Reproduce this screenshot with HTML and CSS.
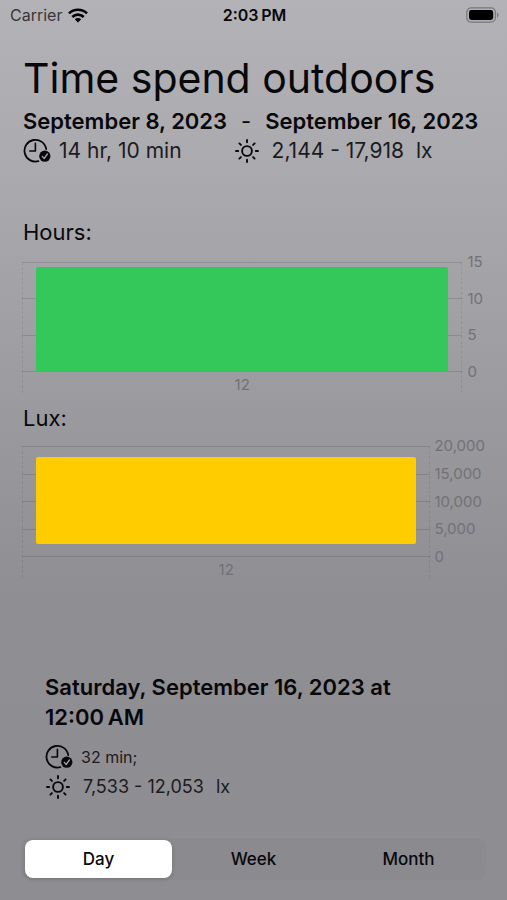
FILE: index.html
```html
<!DOCTYPE html>
<html lang="en">
<head>
<meta charset="utf-8">
<meta name="viewport" content="width=device-width, initial-scale=1">
<title>Time spend outdoors</title>
<link rel="stylesheet" href="styles.css">
</head>
<body>
<svg class="defs" aria-hidden="true">
  <symbol id="clock" viewBox="0 0 28 26">
    <path d="M23.2 11.2A10.9 10.9 0 1 0 15.4 23.2" fill="none" stroke="currentColor" stroke-width="1.8" stroke-linecap="round"/>
    <path d="M12.4 5.4V13H6.8" fill="none" stroke="currentColor" stroke-width="1.6" stroke-linecap="round" stroke-linejoin="round"/>
    <circle cx="21.8" cy="18.2" r="5.6" fill="currentColor"/>
    <path d="M19.3 18.4l1.9 2.1 3.2-4.5" fill="none" stroke="#a3a2a7" stroke-width="1.3" stroke-linecap="round" stroke-linejoin="round"/>
  </symbol>
  <symbol id="sun" viewBox="0 0 26 26">
    <g fill="none" stroke="currentColor" stroke-width="1.9" stroke-linecap="round">
      <circle cx="13" cy="13" r="4.9"/>
      <path d="M13 2v2.2M13 21.8V24M2 13h2.2M21.8 13H24M5.4 5.4l1.5 1.5M19.1 19.1l1.5 1.5M5.4 20.6l1.5-1.5M19.1 6.9l1.5-1.5"/>
    </g>
  </symbol>
</svg>

<header class="status">
  <div class="carrier">
    <span>Carrier</span>
    <svg class="wifi" viewBox="0 0 20 15" aria-hidden="true">
      <g fill="none" stroke="currentColor" stroke-width="2.6">
        <path d="M1 5.4a12.8 12.8 0 0 1 18 0"/>
        <path d="M4.3 9a8.1 8.1 0 0 1 11.4 0"/>
      </g>
      <path d="M10 14.6l-3.2-3.3a4.6 4.6 0 0 1 6.4 0z" fill="currentColor"/>
    </svg>
  </div>
  <time class="clock">2:03&#8239;PM</time>
  <svg class="battery" viewBox="0 0 33 16" aria-hidden="true">
    <rect x="0.8" y="0.8" width="28.6" height="14.4" rx="4.4" fill="none" stroke="#77767b" stroke-width="1.2"/>
    <rect x="3" y="3" width="24.2" height="10" rx="2.4" fill="#000"/>
    <path d="M31 5.6c2 .8 2 4 0 4.8z" fill="#77767b"/>
  </svg>
</header>

<main class="content">
  <h1>Time spend outdoors</h1>
  <p class="range"><span>September 8, 2023</span><span class="dash">-</span><span>September 16, 2023</span></p>
  <div class="totals">
    <p class="metric"><svg class="icon-clock"><use href="#clock"/></svg><span>14 hr, 10 min</span></p>
    <p class="metric light"><svg class="icon-sun"><use href="#sun"/></svg><span>2,144 - 17,918</span><span>lx</span></p>
  </div>

  <section class="chart hours">
    <h2>Hours:</h2>
    <div class="frame">
      <div class="plot">
        <div class="grid"><i></i><i></i><i></i><i></i></div>
        <div class="bar"></div>
      </div>
      <div class="y-axis"><span>15</span><span>10</span><span>5</span><span>0</span></div>
      <div class="x-axis">12</div>
    </div>
  </section>

  <section class="chart lux">
    <h2>Lux:</h2>
    <div class="frame">
      <div class="plot">
        <div class="grid"><i></i><i></i><i></i><i></i><i></i></div>
        <div class="bar"></div>
      </div>
      <div class="y-axis"><span>20,000</span><span>15,000</span><span>10,000</span><span>5,000</span><span>0</span></div>
      <div class="x-axis">12</div>
    </div>
  </section>

  <section class="entry">
    <h3>Saturday, September 16, 2023 at 12:00&#8239;AM</h3>
    <p class="metric"><svg class="icon-clock"><use href="#clock"/></svg><span>32 min;</span></p>
    <p class="metric light"><svg class="icon-sun"><use href="#sun"/></svg><span>7,533 - 12,053</span><span>lx</span></p>
  </section>

  <form class="segments">
    <label><input type="radio" name="period" checked><span>Day</span></label>
    <label><input type="radio" name="period"><span>Week</span></label>
    <label><input type="radio" name="period"><span>Month</span></label>
  </form>
</main>
</body>
</html>
```

FILE: styles.css
```css
* {
  box-sizing: border-box;
}

body {
  margin: 0;
  min-height: 100vh;
  display: flex;
  flex-direction: column;
  background: linear-gradient(#b3b2b7 0, #aaa9ae 20%, #9b9a9f 45%, #8f8e93 66%, #8e8d92 100%);
  color: #08080a;
  font-family: Inter, "Liberation Sans", sans-serif;
}

h1, h2, h3, p {
  margin: 0;
}

.defs {
  position: absolute;
  width: 0;
  height: 0;
}

.status {
  display: grid;
  grid-template-columns: 1fr auto 1fr;
  align-items: center;
  height: 30px;
  padding: 0 8px 0 10px;
  font-size: 16px;
}

.carrier {
  display: flex;
  align-items: center;
  gap: 6px;
  color: #38373b;
}

.wifi {
  width: 20px;
  height: 15px;
  color: #000;
}

.clock {
  font-weight: 600;
}

.battery {
  width: 33px;
  height: 16px;
  justify-self: end;
}

.content {
  flex: 1;
  display: flex;
  flex-direction: column;
  padding: 20px 22px;
}

h1 {
  font-size: 41px;
  line-height: 56px;
  font-weight: 400;
  white-space: nowrap;
}

h1, h2, .range, .totals {
  padding-left: 1px;
}

.range {
  display: flex;
  gap: 14px;
  font-size: 22px;
  line-height: 30px;
  font-weight: 600;
  white-space: nowrap;
}

.dash {
  font-weight: 400;
}

.totals {
  display: flex;
  gap: 52px;
  font-size: 21px;
  line-height: 30px;
}

.metric {
  display: flex;
  align-items: center;
  gap: 8px;
  color: #1c1b1f;
  white-space: nowrap;
}

.metric.light {
  gap: 12px;
}

.icon-clock {
  width: 28px;
  height: 26px;
  color: #08080a;
}

.icon-sun {
  width: 26px;
  height: 26px;
  color: #08080a;
}

.chart h2 {
  font-size: 22px;
  line-height: 30px;
  font-weight: 400;
}

.hours {
  margin-top: 51px;
}

.lux {
  margin-top: 10px;
}

.frame {
  display: grid;
  grid-template-columns: 1fr auto;
  grid-template-rows: 110px 21px;
  column-gap: 4px;
  color: #727176;
  font-size: 15px;
  line-height: 16px;
}

.hours .frame {
  margin-top: 15px;
}

.lux .frame {
  margin-top: 13px;
  grid-template-rows: 111px 21px;
}

.plot {
  grid-area: 1 / 1;
  display: grid;
}

.grid {
  grid-area: 1 / 1;
  display: flex;
  flex-direction: column;
  justify-content: space-between;
}

.grid i {
  height: 1px;
  background: #0000001f;
}

.bar {
  grid-area: 1 / 1;
  margin: 5px 14px 0;
  border-radius: 2px 2px 0 0;
  background: #34c85a;
}

.lux .bar {
  margin: 11px 14px 13px;
  border-radius: 2px;
  background: #ffcc00;
}

.y-axis {
  grid-area: 1 / 2;
  display: flex;
  flex-direction: column;
  justify-content: space-between;
  margin: -8px 0;
}

.hours .y-axis {
  padding: 0 2px 0 1px;
}

.x-axis {
  grid-area: 1 / 1 / 3 / 2;
  display: flex;
  align-items: flex-end;
  justify-content: center;
  border: 1px dashed #00000014;
  border-width: 0 1px;
}

.entry {
  margin-top: 94px;
  padding: 0 23px;
  font-size: 16px;
  line-height: 30px;
}

.entry .light {
  font-size: 18px;
}

.entry h3 {
  margin-bottom: 10px;
  font-size: 22px;
  line-height: 30px;
  font-weight: 600;
}

.segments {
  display: flex;
  margin: auto -1px 0;
  padding: 2px 0;
  border-radius: 9px;
  background: #8b8a8f;
}

.segments label {
  flex: 1;
  display: flex;
}

.segments input {
  position: absolute;
  opacity: 0;
}

.segments span {
  flex: 1;
  margin: 0 4px;
  border-radius: 8px;
  font-size: 17px;
  line-height: 38px;
  font-weight: 500;
  text-align: center;
}

.segments input:checked + span {
  background: #fff;
  box-shadow: 0 1px 4px #0000002e;
}
```
